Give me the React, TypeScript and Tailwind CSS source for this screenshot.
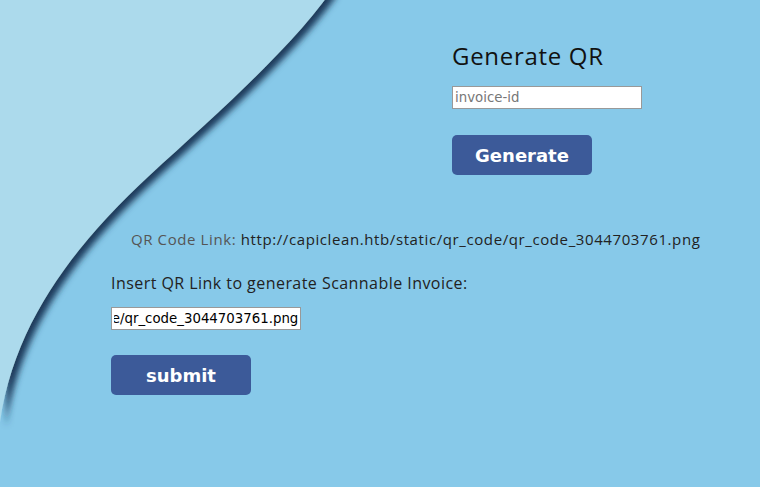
import React, { useEffect, useRef } from "react";

const qrLink = "http://capiclean.htb/static/qr_code/qr_code_3044703761.png";

const Wave: React.FC = () => (
  <svg
    className="absolute inset-0 h-full w-full"
    viewBox="0 0 760 487"
    preserveAspectRatio="none"
    aria-hidden="true"
  >
    <defs>
      <filter id="edge" x="-20%" y="-20%" width="140%" height="140%">
        <feDropShadow dx="6" dy="4" stdDeviation="3" floodColor="#1d3b5b" floodOpacity="1" />
      </filter>
    </defs>
    <path
      d="M0,-10 L332,-10 C290,50 210,120 150,175 C80,240 15,318 0,422 Z"
      fill="#acdaec"
      filter="url(#edge)"
    />
  </svg>
);

const App: React.FC = () => {
  const linkInput = useRef<HTMLInputElement>(null);

  useEffect(() => {
    if (linkInput.current) linkInput.current.scrollLeft = linkInput.current.scrollWidth;
  }, []);

  return (
    <div className="relative min-h-screen overflow-hidden bg-[#87c9e9] font-['Open_Sans',sans-serif]">
      <Wave />

      <div className="relative">
        <section className="ml-[452px] pt-[40px]">
          <h1 className="text-[24px] leading-[32px] tracking-[0.7px] text-[#111]">Generate QR</h1>
          <input
            type="text"
            placeholder="invoice-id"
            className="mt-[14px] block h-[23px] w-[190px] border border-[#999] bg-white px-[2px] font-['DejaVu_Sans',sans-serif] text-[13.333px] text-black placeholder:text-[#777]"
          />
          <button
            type="button"
            className="mt-[26px] h-[40px] w-[140px] rounded-[5px] bg-[#3c5a99] font-['DejaVu_Sans',sans-serif] text-[18px] font-bold text-white"
          >
            Generate
          </button>
        </section>

        <section className="ml-[111px] mt-[52px]">
          <p className="ml-[20px] text-[15px] leading-[24px] tracking-[0.6px] text-[#222]">
            <span className="text-[#555]">QR Code Link:</span> {qrLink}
          </p>
          <p className="mt-[20px] text-[16px] leading-[24px] tracking-[0.45px] text-[#222]">
            Insert QR Link to generate Scannable Invoice:
          </p>
          <input
            ref={linkInput}
            type="text"
            defaultValue={qrLink}
            className="mt-[12px] block h-[23px] w-[190px] border border-[#999] bg-white px-[2px] font-['DejaVu_Sans',sans-serif] text-[13.333px] text-black"
          />
          <button
            type="button"
            className="mt-[25px] h-[40px] w-[140px] rounded-[5px] bg-[#3c5a99] font-['DejaVu_Sans',sans-serif] text-[18px] font-bold text-white"
          >
            submit
          </button>
        </section>
      </div>
    </div>
  );
};

export default App;
